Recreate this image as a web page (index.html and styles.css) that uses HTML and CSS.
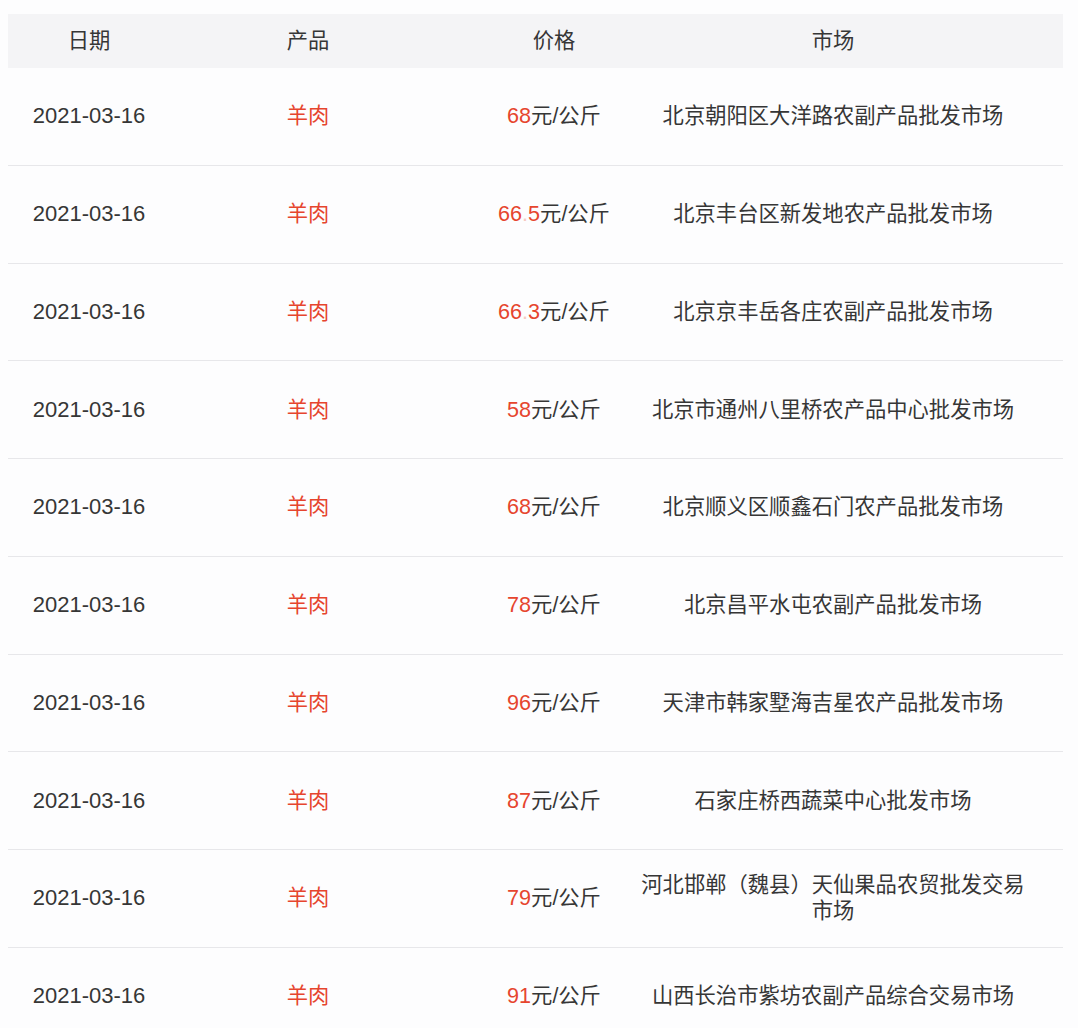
FILE: index.html
```html
<!DOCTYPE html>
<html lang="zh-CN">
<head>
<meta charset="utf-8">
<title>羊肉价格</title>
<link rel="stylesheet" href="styles.css">
</head>
<body>
<div class="wrap">
  <div class="table">
    <div class="row head">
      <div class="c c1">日期</div>
      <div class="c c2">产品</div>
      <div class="c c3">价格</div>
      <div class="c c4">市场</div>
    </div>
    <div class="row">
      <div class="c c1 date">2021-03-16</div>
      <div class="c c2 red">羊肉</div>
      <div class="c c3"><span class="red num">68</span>元/公斤</div>
      <div class="c c4">北京朝阳区大洋路农副产品批发市场</div>
    </div>
    <div class="row">
      <div class="c c1 date">2021-03-16</div>
      <div class="c c2 red">羊肉</div>
      <div class="c c3"><span class="red num">66<span class="dot">.</span>5</span>元/公斤</div>
      <div class="c c4">北京丰台区新发地农产品批发市场</div>
    </div>
    <div class="row">
      <div class="c c1 date">2021-03-16</div>
      <div class="c c2 red">羊肉</div>
      <div class="c c3"><span class="red num">66<span class="dot">.</span>3</span>元/公斤</div>
      <div class="c c4">北京京丰岳各庄农副产品批发市场</div>
    </div>
    <div class="row">
      <div class="c c1 date">2021-03-16</div>
      <div class="c c2 red">羊肉</div>
      <div class="c c3"><span class="red num">58</span>元/公斤</div>
      <div class="c c4">北京市通州八里桥农产品中心批发市场</div>
    </div>
    <div class="row">
      <div class="c c1 date">2021-03-16</div>
      <div class="c c2 red">羊肉</div>
      <div class="c c3"><span class="red num">68</span>元/公斤</div>
      <div class="c c4">北京顺义区顺鑫石门农产品批发市场</div>
    </div>
    <div class="row">
      <div class="c c1 date">2021-03-16</div>
      <div class="c c2 red">羊肉</div>
      <div class="c c3"><span class="red num">78</span>元/公斤</div>
      <div class="c c4">北京昌平水屯农副产品批发市场</div>
    </div>
    <div class="row">
      <div class="c c1 date">2021-03-16</div>
      <div class="c c2 red">羊肉</div>
      <div class="c c3"><span class="red num">96</span>元/公斤</div>
      <div class="c c4">天津市韩家墅海吉星农产品批发市场</div>
    </div>
    <div class="row">
      <div class="c c1 date">2021-03-16</div>
      <div class="c c2 red">羊肉</div>
      <div class="c c3"><span class="red num">87</span>元/公斤</div>
      <div class="c c4">石家庄桥西蔬菜中心批发市场</div>
    </div>
    <div class="row">
      <div class="c c1 date">2021-03-16</div>
      <div class="c c2 red">羊肉</div>
      <div class="c c3"><span class="red num">79</span>元/公斤</div>
      <div class="c c4">河北邯郸（魏县）天仙果品农贸批发交易市场</div>
    </div>
    <div class="row">
      <div class="c c1 date">2021-03-16</div>
      <div class="c c2 red">羊肉</div>
      <div class="c c3"><span class="red num">91</span>元/公斤</div>
      <div class="c c4">山西长治市紫坊农副产品综合交易市场</div>
    </div>
  </div>
</div>
</body>
</html>
```

FILE: styles.css
```css
html, body {
  margin: 0;
  padding: 0;
  background: #fdfdfe;
}
body {
  font-family: "Liberation Sans", "Noto Sans CJK SC", Arial, sans-serif;
  font-size: 21.3px;
  color: #363636;
  overflow: hidden;
}
.wrap {
  padding: 14px 0 0 8px;
}
.table {
  width: 1055px;
}
.row {
  display: grid;
  grid-template-columns: 162px 276px 190px 427px;
  align-items: center;
  height: 97.75px;
  box-sizing: border-box;
  border-bottom: 1px solid #e7e7ea;
}
.row.head {
  height: 54px;
  background: #f4f4f6;
  border-bottom: none;
}
.c {
  text-align: center;
  line-height: 26px;
}
.c3 {
  padding-left: 26px;
  white-space: nowrap;
}
.c4 {
  padding-right: 33px;
}
.date {
  font-size: 22px;
}
.red {
  color: #e6452e;
}
.num {
  font-size: 21.6px;
}
.dot {
  color: #f6c9c0;
}
```
